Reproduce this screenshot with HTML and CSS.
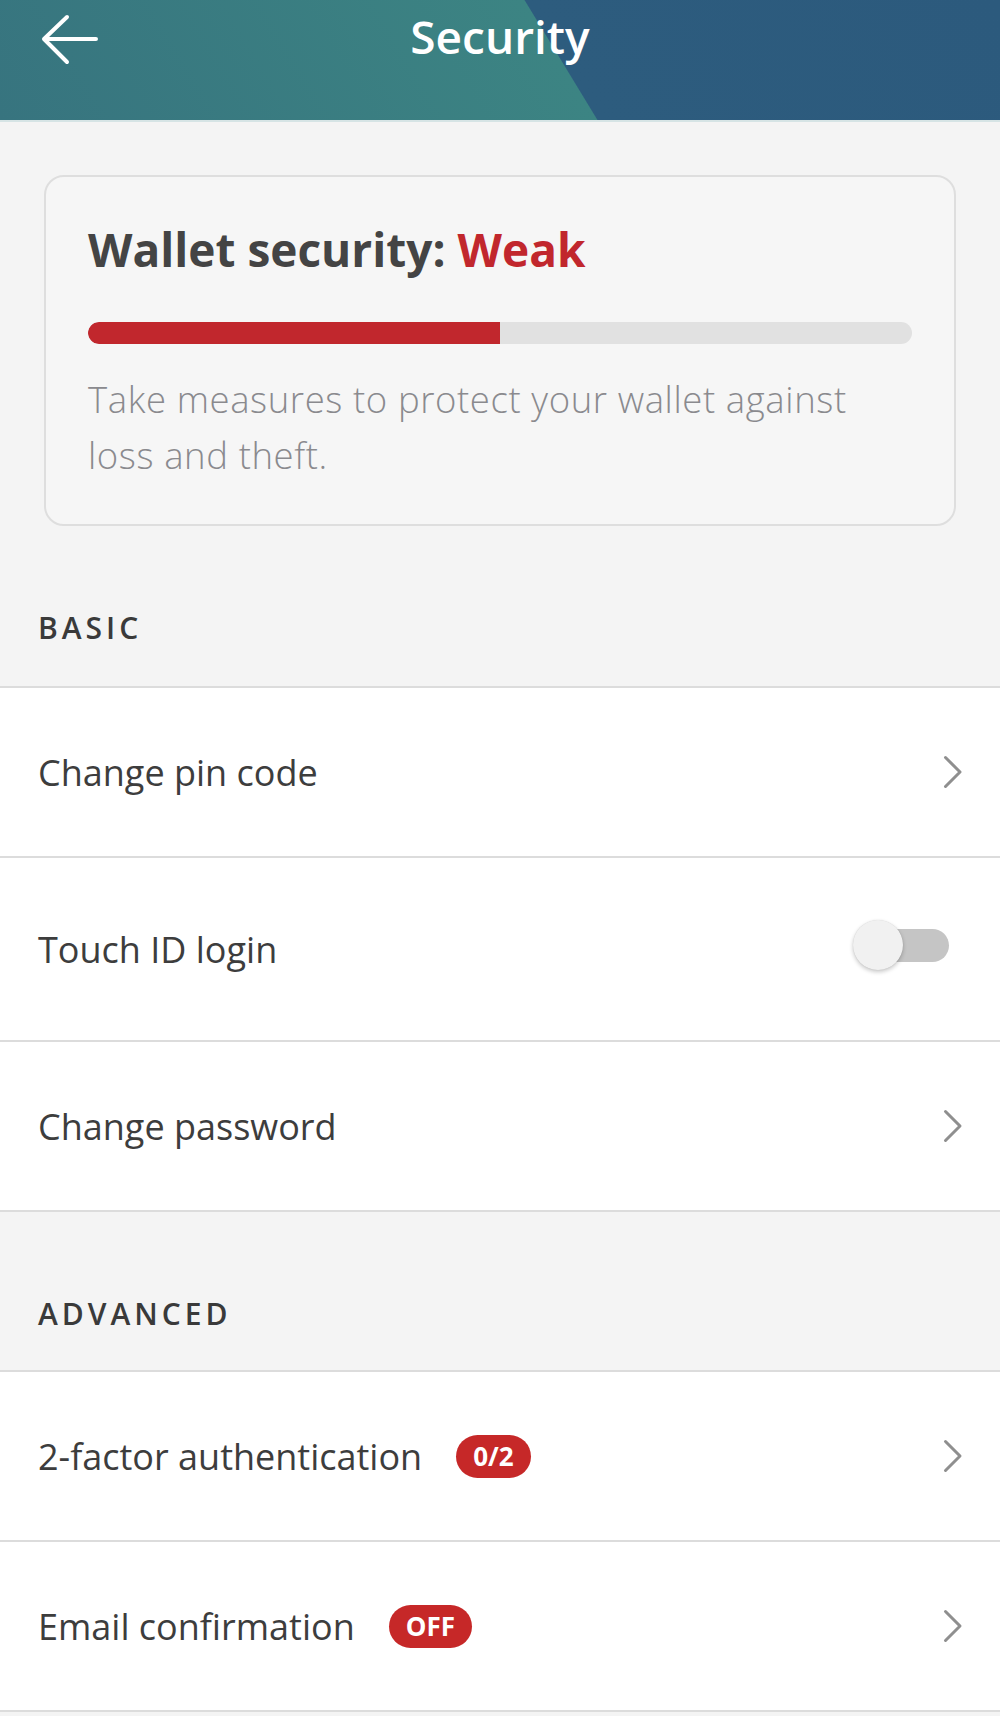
FILE: index.html
```html
<!DOCTYPE html>
<html lang="en">
<head>
<meta charset="utf-8">
<title>Security</title>
<link rel="stylesheet" href="styles.css">
</head>
<body>
<header class="topbar">
  <button class="back" aria-label="Back">
    <svg width="60" height="52" viewBox="0 0 60 52" aria-hidden="true">
      <path d="M56 26 H5 M27 4 L4 26 L27 49" fill="none" stroke="#ffffff" stroke-width="4" stroke-linecap="round" stroke-linejoin="round"/>
    </svg>
  </button>
  <h1 class="title">Security</h1>
  <span class="spacer"></span>
</header>

<main class="page">
  <div class="card-wrap">
    <section class="card">
      <h2 class="card-title">Wallet security: <span class="weak">Weak</span></h2>
      <div class="bar"><div class="bar-fill" style="width: 50%"></div></div>
      <p class="card-text">Take measures to protect your wallet against loss and theft.</p>
    </section>
  </div>

  <h3 class="section-title">BASIC</h3>
  <ul class="list">
    <li class="row">
      <span class="label">Change pin code</span>
      <svg class="chev" width="20" height="34" viewBox="0 0 20 34" aria-hidden="true"><path d="M2.5 2.5 L17 17 L2.5 31.5" fill="none" stroke="#8f8f8f" stroke-width="3" stroke-linecap="round" stroke-linejoin="round"/></svg>
    </li>
    <li class="row row-tall">
      <span class="label">Touch ID login</span>
      <span class="toggle"><span class="track"></span><span class="knob"></span></span>
    </li>
    <li class="row">
      <span class="label">Change password</span>
      <svg class="chev" width="20" height="34" viewBox="0 0 20 34" aria-hidden="true"><path d="M2.5 2.5 L17 17 L2.5 31.5" fill="none" stroke="#8f8f8f" stroke-width="3" stroke-linecap="round" stroke-linejoin="round"/></svg>
    </li>
  </ul>

  <h3 class="section-title section-title-adv">ADVANCED</h3>
  <ul class="list">
    <li class="row">
      <span class="label">2-factor authentication</span>
      <span class="badge">0/2</span>
      <svg class="chev" width="20" height="34" viewBox="0 0 20 34" aria-hidden="true"><path d="M2.5 2.5 L17 17 L2.5 31.5" fill="none" stroke="#8f8f8f" stroke-width="3" stroke-linecap="round" stroke-linejoin="round"/></svg>
    </li>
    <li class="row">
      <span class="label">Email confirmation</span>
      <span class="badge">OFF</span>
      <svg class="chev" width="20" height="34" viewBox="0 0 20 34" aria-hidden="true"><path d="M2.5 2.5 L17 17 L2.5 31.5" fill="none" stroke="#8f8f8f" stroke-width="3" stroke-linecap="round" stroke-linejoin="round"/></svg>
    </li>
  </ul>
</main>
</body>
</html>
```

FILE: styles.css
```css
* { box-sizing: border-box; }

html, body {
  margin: 0;
  padding: 0;
}

body {
  width: 1000px;
  min-height: 1716px;
  background: #f4f4f4;
  font-family: "Open Sans", "Noto Sans", "DejaVu Sans", sans-serif;
  color: #3d3d3d;
}

/* Header */
.topbar {
  height: 122px;
  display: grid;
  grid-template-columns: 1fr auto 1fr;
  align-items: start;
  background: linear-gradient(58.7deg, #37747f 0, #3c8483 510px, #2d5c7e 511px, #2c5a7d 100%);
  border-bottom: 2px solid #d6e4e5;
}

.back {
  justify-self: start;
  margin: 13px 0 0 40px;
  padding: 0;
  border: 0;
  background: none;
  width: 60px;
  height: 52px;
  display: block;
}

.back svg { display: block; }

.title {
  margin: 9px 0 0;
  font-size: 46px;
  line-height: 54px;
  font-weight: 600;
  color: #ffffff;
  letter-spacing: 0;
}

/* Card */
.card-wrap {
  padding: 53px 44px 0;
}

.card {
  background: #f6f6f6;
  border: 2px solid #dedede;
  border-radius: 20px;
  padding: 44px 42px 41px;
}

.card-title {
  margin: 0;
  font-size: 46px;
  line-height: 56px;
  font-weight: 700;
  color: #444444;
  letter-spacing: 0;
}

.weak { color: #c1272d; }

.bar {
  margin-top: 45px;
  height: 22px;
  border-radius: 11px;
  background: #e1e1e1;
  overflow: hidden;
}

.bar-fill {
  height: 100%;
  background: #c1272d;
  border-radius: 11px 0 0 11px;
}

.card-text {
  margin: 27px 0 0;
  max-width: 790px;
  font-size: 36.5px;
  line-height: 56px;
  font-weight: 300;
  letter-spacing: 0.6px;
  color: #8a8a8e;
}

/* Sections */
.section-title {
  margin: 0;
  height: 162px;
  padding: 84px 38px 0;
  font-size: 30px;
  line-height: 36px;
  font-weight: 600;
  letter-spacing: 4px;
  color: #3a3a3a;
  border-bottom: 2px solid #dcdcdc;
}

.section-title-adv { height: 160px; }

.list {
  list-style: none;
  margin: 0;
  padding: 0;
  background: #ffffff;
}

.row {
  display: flex;
  align-items: center;
  height: 170px;
  padding: 0 37px 0 38px;
  border-bottom: 2px solid #dcdcdc;
  background: #ffffff;
}

.row-tall { height: 184px; }

.label {
  font-size: 36px;
  font-weight: 400;
  letter-spacing: 0;
  color: #3d3d3d;
}

.chev {
  display: block;
  margin-left: auto;
  flex: none;
}

.badge {
  margin-left: 34px;
  height: 43px;
  padding: 0 17px;
  border-radius: 22px;
  background: #c62828;
  color: #ffffff;
  font-size: 26px;
  line-height: 43px;
  font-weight: 700;
}

/* Toggle */
.toggle {
  position: relative;
  margin-left: auto;
  margin-right: 14px;
  margin-top: -8px;
  width: 96px;
  height: 50px;
  flex: none;
}

.track {
  position: absolute;
  right: 0;
  top: 9px;
  width: 84px;
  height: 33px;
  border-radius: 17px;
  background: #c5c5c5;
}

.knob {
  position: absolute;
  left: 0;
  top: 0;
  width: 50px;
  height: 50px;
  border-radius: 50%;
  background: #f1f1f1;
  box-shadow: 0 2px 4px rgba(0, 0, 0, 0.22), 0 0 1px rgba(0, 0, 0, 0.15);
}
```
